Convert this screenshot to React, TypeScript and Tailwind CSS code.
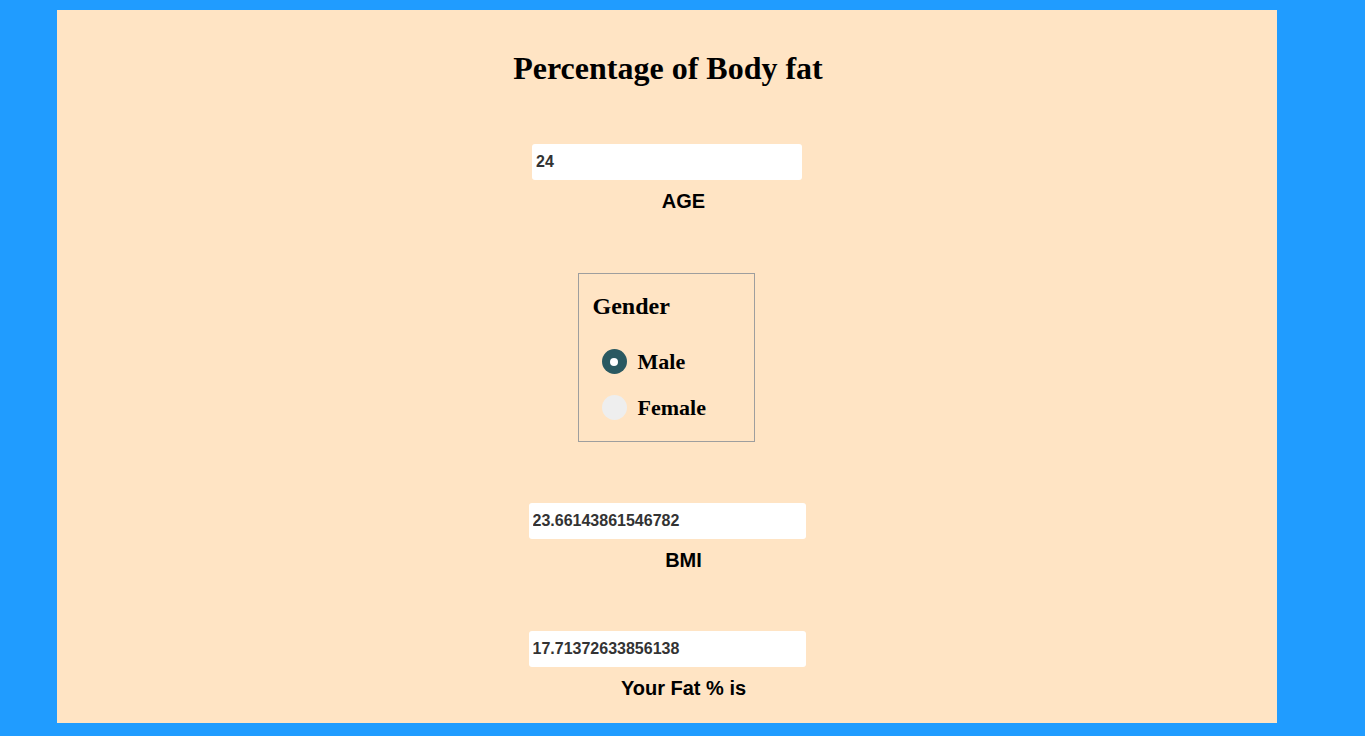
import { useState } from "react";

const serif = { fontFamily: '"Liberation Serif", "Times New Roman", serif' };

const Field = ({ value, label, width }: { value: string; label: string; width: string }) => (
  <div className="flex flex-col items-center">
    <input
      readOnly
      value={value}
      className={`${width} h-[36px] rounded-[3px] bg-white pl-[4px] text-[16px] font-bold text-[#333] outline-none font-['Liberation_Sans',Arial,sans-serif]`}
    />
    <label className="ml-[33px] mt-[10px] text-[20px] leading-[23px] font-bold text-black font-['Liberation_Sans',Arial,sans-serif]">
      {label}
    </label>
  </div>
);

const Radio = ({ checked, label, onClick }: { checked: boolean; label: string; onClick: () => void }) => (
  <div className="flex items-center gap-[11px] cursor-pointer" onClick={onClick}>
    {checked ? (
      <span className="flex h-[25px] w-[25px] items-center justify-center rounded-full bg-[#2a5961]">
        <span className="h-[8px] w-[8px] rounded-full bg-white" />
      </span>
    ) : (
      <span className="h-[25px] w-[25px] rounded-full bg-[#eeeeee]" />
    )}
    <span className="text-[22px] leading-[25px] font-bold text-black" style={serif}>
      {label}
    </span>
  </div>
);

export default function App() {
  const [gender, setGender] = useState("male");

  return (
    <div className="min-h-[736px] bg-[#209cff] pt-[10px] pb-[13px]">
      <div className="ml-[57px] w-[1220px] h-[713px] bg-[#ffe4c4] flex flex-col items-center">
        <h1 className="mt-[40px] ml-[2px] text-[32px] leading-[37px] font-bold text-black" style={serif}>
          Percentage of Body fat
        </h1>

        <div className="mt-[57px]">
          <Field value="24" label="AGE" width="w-[270px]" />
        </div>

        <fieldset className="mt-[60px] mr-[2px] w-[177px] h-[169px] border border-[#9e9e9e] pl-[14px] pt-[18px]">
          <div className="text-[24px] leading-[28px] font-bold text-black" style={serif}>
            Gender
          </div>
          <div className="mt-[29px] ml-[9px] flex flex-col gap-[21px]">
            <Radio checked={gender === "male"} label="Male" onClick={() => setGender("male")} />
            <Radio checked={gender === "female"} label="Female" onClick={() => setGender("female")} />
          </div>
        </fieldset>

        <div className="mt-[61px]">
          <Field value="23.66143861546782" label="BMI" width="w-[277px]" />
        </div>

        <div className="mt-[59px]">
          <Field value="17.71372633856138" label="Your Fat % is" width="w-[277px]" />
        </div>
      </div>
    </div>
  );
}
